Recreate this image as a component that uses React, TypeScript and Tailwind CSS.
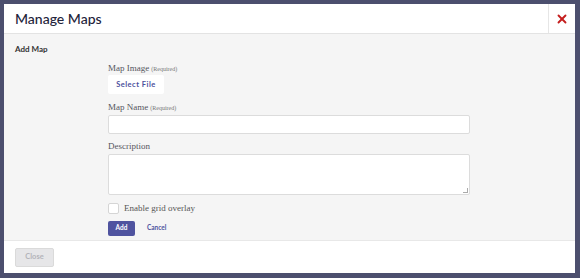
import { X } from "lucide-react";

const sans = "font-['Lato','Open_Sans','Liberation_Sans',sans-serif]";
const serif = "font-['Liberation_Serif',serif]";

const Label = ({ text, required }: { text: string; required?: boolean }) => (
  <div className={`${serif} h-[10px] flex items-end text-[9px] leading-none text-[#55555f]`}>
    {text}
    {required && <span className="text-[6px] leading-none text-[#777] ml-[2px] mb-[1px]">(Required)</span>}
  </div>
);

export default function App() {
  return (
    <div className={`w-[580px] h-[278px] bg-[#4c4f6e] pl-[4px] pt-[4px] pr-[5px] pb-[5px] ${sans}`}>
      <div className="h-full bg-white flex flex-col">
        <div className="h-[30px] shrink-0 flex items-stretch border-b border-[#e3e3e3]">
          <div className="flex-1 pl-[11px] flex items-center text-[14px] leading-none font-medium text-[#22233a]">Manage Maps</div>
          <button className="w-[27px] border-l border-[#e6e6e6] flex items-center justify-center text-[#c41e1e]">
            <X size={14} strokeWidth={3.2} />
          </button>
        </div>

        <div className="flex-1 bg-[#f5f5f5] px-[11px] pt-[10px]">
          <div className="h-[10px] flex items-center text-[8px] leading-none font-bold text-[#333]">Add Map</div>
          <div className="ml-[93px] w-[362px] mt-[9px]">
            <Label text="Map Image" required />
            <button className="mt-[2px] h-[19px] w-[56px] bg-white rounded-[2px] text-[7.5px] leading-none font-bold tracking-[0.5px] text-[#4b4f9c] block">Select File</button>

            <div className="mt-[8px]">
              <Label text="Map Name" required />
              <div className="mt-[3px] h-[19px] bg-white border border-[#dcdcdc] rounded-[2px]" />
            </div>

            <div className="mt-[7px]">
              <Label text="Description" />
              <div className="mt-[3px] h-[41px] bg-white border border-[#dcdcdc] rounded-[2px] relative">
                <span className="absolute right-[1px] bottom-[1px] w-[5px] h-[5px] border-r border-b border-[#aaa]" />
              </div>
            </div>

            <div className="flex items-center mt-[8px] h-[11px]">
              <div className="w-[11px] h-[11px] bg-white border border-[#d5d5d5] rounded-[2px]" />
              <span className={`${serif} ml-[5px] text-[9px] leading-none text-[#555]`}>Enable grid overlay</span>
            </div>

            <div className="flex items-center mt-[7px]">
              <button className="w-[27px] h-[15px] bg-[#4f539f] rounded-[2px] text-white text-[6.5px] leading-none font-bold">Add</button>
              <span className="ml-[12px] text-[6.5px] leading-none font-bold text-[#4f539f]">Cancel</span>
            </div>
          </div>
        </div>

        <div className="h-[33px] shrink-0 border-t border-[#e8e8e8] px-[11px] flex items-center">
          <button className="w-[39px] h-[19px] bg-[#e6e6e8] border border-[#dadada] rounded-[2px] text-[7.5px] leading-none text-[#b4b4ba] font-bold">Close</button>
        </div>
      </div>
    </div>
  );
}
